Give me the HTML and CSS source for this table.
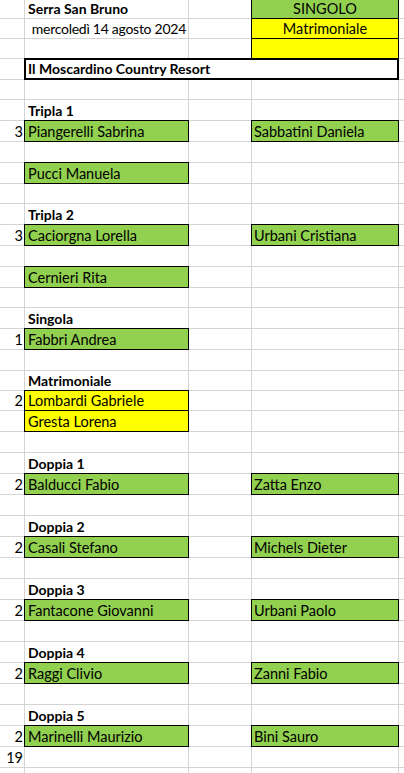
FILE: index.html
```html
<!DOCTYPE html>
<html lang="it">
<head>
<meta charset="utf-8">
<title>Serra San Bruno</title>
<link rel="stylesheet" href="styles.css">
</head>
<body>
<div class="sheet">
  <div class="row r19"><div class="cell ca"></div><div class="cell cb bold">Serra San Bruno</div><div class="cell cc"></div><div class="cell cd box green center">SINGOLO</div><div class="cell ce"></div></div>
  <div class="row r20"><div class="cell ca"></div><div class="cell cb right date">mercoledì 14 agosto 2024</div><div class="cell cc"></div><div class="cell cd box yellow center">Matrimoniale</div><div class="cell ce"></div></div>
  <div class="row r20"><div class="cell ca"></div><div class="cell cb"></div><div class="cell cc"></div><div class="cell cd box yellow"></div><div class="cell ce"></div></div>
  <div class="row"><div class="cell ca"></div><div class="cell cspan thick bold">Il Moscardino Country Resort</div><div class="cell ce"></div></div>
  <div class="row r20"><div class="cell ca"></div><div class="cell cb"></div><div class="cell cc"></div><div class="cell cd"></div><div class="cell ce"></div></div>
  <div class="row"><div class="cell ca"></div><div class="cell cb bold">Tripla 1</div><div class="cell cc"></div><div class="cell cd"></div><div class="cell ce"></div></div>
  <div class="row"><div class="cell ca num">3</div><div class="cell cb box green">Piangerelli Sabrina</div><div class="cell cc"></div><div class="cell cd box green">Sabbatini Daniela</div><div class="cell ce"></div></div>
  <div class="row"><div class="cell ca"></div><div class="cell cb"></div><div class="cell cc"></div><div class="cell cd"></div><div class="cell ce"></div></div>
  <div class="row"><div class="cell ca"></div><div class="cell cb box green">Pucci Manuela</div><div class="cell cc"></div><div class="cell cd"></div><div class="cell ce"></div></div>
  <div class="row r20"><div class="cell ca"></div><div class="cell cb"></div><div class="cell cc"></div><div class="cell cd"></div><div class="cell ce"></div></div>
  <div class="row"><div class="cell ca"></div><div class="cell cb bold">Tripla 2</div><div class="cell cc"></div><div class="cell cd"></div><div class="cell ce"></div></div>
  <div class="row"><div class="cell ca num">3</div><div class="cell cb box green">Caciorgna Lorella</div><div class="cell cc"></div><div class="cell cd box green">Urbani Cristiana</div><div class="cell ce"></div></div>
  <div class="row"><div class="cell ca"></div><div class="cell cb"></div><div class="cell cc"></div><div class="cell cd"></div><div class="cell ce"></div></div>
  <div class="row"><div class="cell ca"></div><div class="cell cb box green">Cernieri Rita</div><div class="cell cc"></div><div class="cell cd"></div><div class="cell ce"></div></div>
  <div class="row r20"><div class="cell ca"></div><div class="cell cb"></div><div class="cell cc"></div><div class="cell cd"></div><div class="cell ce"></div></div>
  <div class="row"><div class="cell ca"></div><div class="cell cb bold">Singola</div><div class="cell cc"></div><div class="cell cd"></div><div class="cell ce"></div></div>
  <div class="row"><div class="cell ca num">1</div><div class="cell cb box green">Fabbri Andrea</div><div class="cell cc"></div><div class="cell cd"></div><div class="cell ce"></div></div>
  <div class="row"><div class="cell ca"></div><div class="cell cb"></div><div class="cell cc"></div><div class="cell cd"></div><div class="cell ce"></div></div>
  <div class="row r20"><div class="cell ca"></div><div class="cell cb bold">Matrimoniale</div><div class="cell cc"></div><div class="cell cd"></div><div class="cell ce"></div></div>
  <div class="row r20"><div class="cell ca num">2</div><div class="cell cb box yellow">Lombardi Gabriele</div><div class="cell cc"></div><div class="cell cd"></div><div class="cell ce"></div></div>
  <div class="row"><div class="cell ca"></div><div class="cell cb box yellow">Gresta Lorena</div><div class="cell cc"></div><div class="cell cd"></div><div class="cell ce"></div></div>
  <div class="row"><div class="cell ca"></div><div class="cell cb"></div><div class="cell cc"></div><div class="cell cd"></div><div class="cell ce"></div></div>
  <div class="row"><div class="cell ca"></div><div class="cell cb bold">Doppia 1</div><div class="cell cc"></div><div class="cell cd"></div><div class="cell ce"></div></div>
  <div class="row"><div class="cell ca num">2</div><div class="cell cb box green">Balducci Fabio</div><div class="cell cc"></div><div class="cell cd box green">Zatta Enzo</div><div class="cell ce"></div></div>
  <div class="row"><div class="cell ca"></div><div class="cell cb"></div><div class="cell cc"></div><div class="cell cd"></div><div class="cell ce"></div></div>
  <div class="row"><div class="cell ca"></div><div class="cell cb bold">Doppia 2</div><div class="cell cc"></div><div class="cell cd"></div><div class="cell ce"></div></div>
  <div class="row"><div class="cell ca num">2</div><div class="cell cb box green">Casali Stefano</div><div class="cell cc"></div><div class="cell cd box green">Michels Dieter</div><div class="cell ce"></div></div>
  <div class="row"><div class="cell ca"></div><div class="cell cb"></div><div class="cell cc"></div><div class="cell cd"></div><div class="cell ce"></div></div>
  <div class="row"><div class="cell ca"></div><div class="cell cb bold">Doppia 3</div><div class="cell cc"></div><div class="cell cd"></div><div class="cell ce"></div></div>
  <div class="row"><div class="cell ca num">2</div><div class="cell cb box green">Fantacone Giovanni</div><div class="cell cc"></div><div class="cell cd box green">Urbani Paolo</div><div class="cell ce"></div></div>
  <div class="row"><div class="cell ca"></div><div class="cell cb"></div><div class="cell cc"></div><div class="cell cd"></div><div class="cell ce"></div></div>
  <div class="row"><div class="cell ca"></div><div class="cell cb bold">Doppia 4</div><div class="cell cc"></div><div class="cell cd"></div><div class="cell ce"></div></div>
  <div class="row"><div class="cell ca num">2</div><div class="cell cb box green">Raggi Clivio</div><div class="cell cc"></div><div class="cell cd box green">Zanni Fabio</div><div class="cell ce"></div></div>
  <div class="row"><div class="cell ca"></div><div class="cell cb"></div><div class="cell cc"></div><div class="cell cd"></div><div class="cell ce"></div></div>
  <div class="row"><div class="cell ca"></div><div class="cell cb bold">Doppia 5</div><div class="cell cc"></div><div class="cell cd"></div><div class="cell ce"></div></div>
  <div class="row"><div class="cell ca num">2</div><div class="cell cb box green">Marinelli Maurizio</div><div class="cell cc"></div><div class="cell cd box green">Bini Sauro</div><div class="cell ce"></div></div>
  <div class="row"><div class="cell ca num">19</div><div class="cell cb"></div><div class="cell cc"></div><div class="cell cd"></div><div class="cell ce"></div></div>
  <div class="row"><div class="cell ca"></div><div class="cell cb"></div><div class="cell cc"></div><div class="cell cd"></div><div class="cell ce"></div></div>
</div>
</body>
</html>
```
FILE: styles.css
```css
html, body {
  margin: 0;
  padding: 0;
  background: #ffffff;
}

body {
  font-family: Lato, "Liberation Sans", sans-serif;
  font-size: 14.5px;
  color: #000000;
  overflow: hidden;
}

.sheet {
  display: flex;
  flex-direction: column;
  width: 404px;
}

.row {
  display: flex;
  height: 21px;
  flex: none;
}

.row.r20 { height: 20px; }
.row.r19 { height: 19px; }

.cell {
  box-sizing: border-box;
  height: 100%;
  border-right: 1px solid #d4d4d4;
  border-bottom: 1px solid #d4d4d4;
  display: flex;
  align-items: flex-end;
  padding: 0 2px 1px 3px;
  line-height: 17px;
  white-space: nowrap;
  overflow: visible;
  flex: none;
}

.ca { width: 25px; justify-content: flex-end; padding-right: 1px; }
.cb { width: 164px; }
.cc { width: 63px; }
.cd { width: 147px; padding-left: 2px; }
.ce { flex: 1 1 auto; border-right: none; }
.cspan { width: 374px; }

.bold { font-weight: 700; font-size: 14px; }
.center { justify-content: center; }
.right { justify-content: flex-end; }
.date { font-size: 14px; letter-spacing: -0.27px; padding-right: 2px; }

.green { background: #92d050; }
.yellow { background: #ffff00; }

.box {
  border-right-color: #000000;
  border-bottom-color: #000000;
  box-shadow: 0 -1px 0 #000000, -1px 0 0 #000000, -1px -1px 0 #000000;
}

.thick {
  border: 1px solid #000000;
  border-right-width: 2px;
  border-bottom-width: 2px;
  box-shadow: 0 -1px 0 #000000, -1px 0 0 #000000, -1px -1px 0 #000000;
  padding-left: 2px;
}
```
